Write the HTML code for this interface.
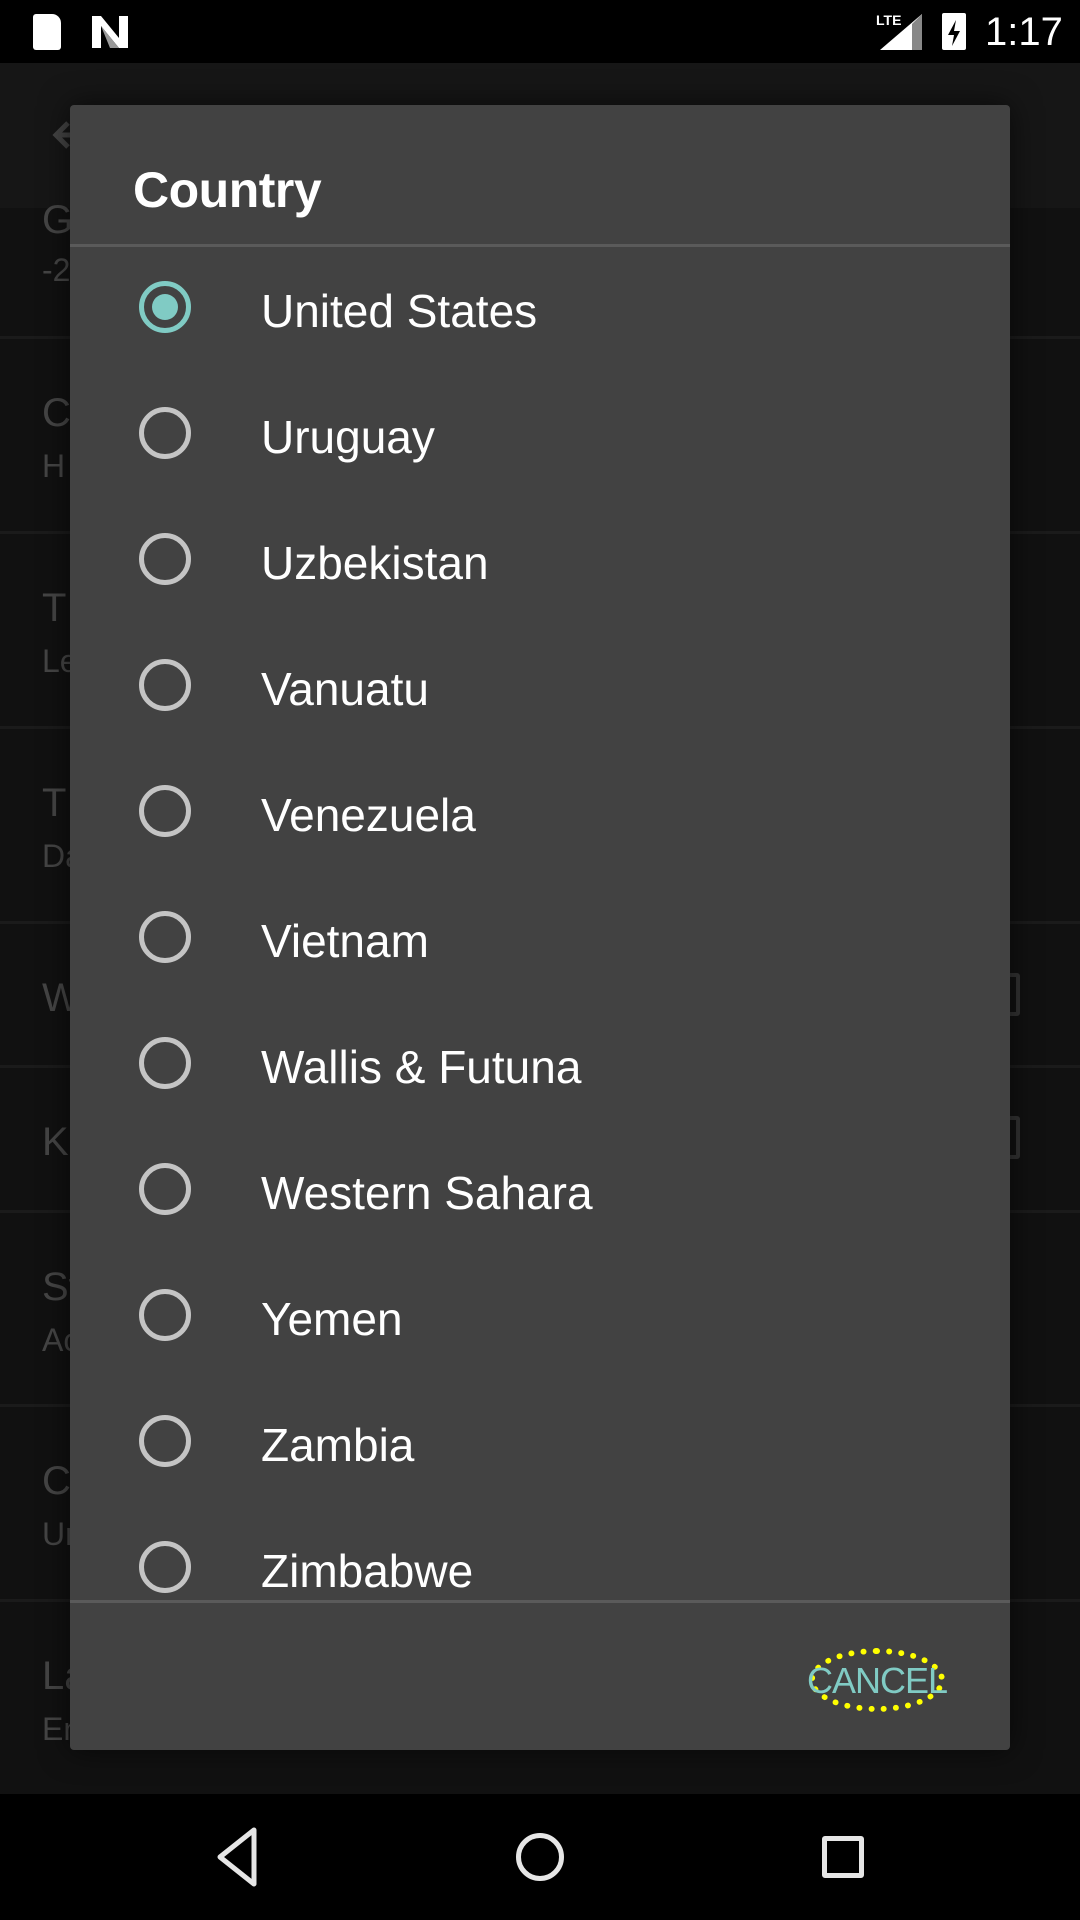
<!DOCTYPE html>
<html><head><meta charset="utf-8"><style>
*{margin:0;padding:0;box-sizing:border-box}
body{width:1080px;height:1920px;background:#111;position:relative;overflow:hidden;font-family:"Liberation Sans",sans-serif}
.abs{position:absolute}
.bgt{position:absolute;left:42px;color:#454545;font-size:40px;line-height:1}
.sep{position:absolute;left:0;width:1080px;height:3px;background:#1b1b1b}
.dlg{position:absolute;left:70px;top:105px;width:940px;height:1645px;background:#424242;border-radius:4px;overflow:hidden;box-shadow:0 0 30px rgba(0,0,0,.6)}
.row{position:absolute;left:0;width:940px;height:126px}
.radio{position:absolute;left:69px;width:52px;height:52px;border:5px solid #c4c4c4;border-radius:50%}
.lbl{position:absolute;left:191px;color:#fff;font-size:46px;line-height:1}
</style></head><body>
<div class="abs" style="left:0;top:0;width:1080px;height:63px;background:#000"></div>
<div class="abs" style="left:33px;top:14px;width:28px;height:36px;background:#fff;border-radius:3px 9px 3px 3px"></div>
<svg class="abs" style="left:90px;top:14px" width="40" height="36" viewBox="0 0 40 36"><path d="M2 2h9l18 22V2h9v32h-9L11 12v22H2z" fill="#fff"/><path d="M11 12l18 22h-9z" fill="#999"/></svg>
<div class="abs" style="left:876px;top:12px;color:#fff;font-size:14px;font-weight:bold">LTE</div>
<svg class="abs" style="left:880px;top:14px" width="42" height="36"><path d="M42 0V36H0z" fill="#fff"/><path d="M42 0V36H32V10z" fill="#888"/></svg>
<div class="abs" style="left:942px;top:13px;width:24px;height:37px;background:#fff;border-radius:2px"></div>
<svg class="abs" style="left:944px;top:18px" width="20" height="30"><path d="M12 2L4 17h6l-2 11 8-15h-6z" fill="#000"/></svg>
<div class="abs" style="left:985px;top:10px;color:#fff;font-size:40px">1:17</div>
<div class="abs" style="left:0;top:63px;width:1080px;height:145px;background:#161616"></div>
<svg class="abs" style="left:48px;top:115px" width="40" height="40"><path d="M34 20H10M20 8L8 20l12 12" stroke="#444" stroke-width="5" fill="none"/></svg>
<div class="bgt" style="top:200px">G</div><div class="bgt" style="top:254px;font-size:32px">-2</div>
<div class="sep" style="top:336px"></div>
<div class="bgt" style="top:393px">C</div><div class="bgt" style="top:450px;font-size:32px">H</div>
<div class="sep" style="top:531px"></div>
<div class="bgt" style="top:588px">T</div><div class="bgt" style="top:645px;font-size:32px">Le</div>
<div class="sep" style="top:726px"></div>
<div class="bgt" style="top:783px">T</div><div class="bgt" style="top:840px;font-size:32px">Da</div>
<div class="sep" style="top:921px"></div>
<div class="bgt" style="top:978px">W</div>
<div class="sep" style="top:1065px"></div>
<div class="bgt" style="top:1122px">K</div>
<div class="sep" style="top:1210px"></div>
<div class="bgt" style="top:1267px">St</div><div class="bgt" style="top:1324px;font-size:32px">Ac</div>
<div class="sep" style="top:1404px"></div>
<div class="bgt" style="top:1461px">C</div><div class="bgt" style="top:1518px;font-size:32px">Ur</div>
<div class="sep" style="top:1599px"></div>
<div class="bgt" style="top:1656px">La</div><div class="bgt" style="top:1713px;font-size:32px">En</div>
<div class="abs" style="left:990px;top:973px;width:30px;height:43px;border:4px solid #333;border-radius:3px"></div>
<div class="abs" style="left:990px;top:1116px;width:30px;height:43px;border:4px solid #333;border-radius:3px"></div>
<div class="dlg">
<div class="abs" style="left:63px;top:60px;color:#fff;font-size:50px;font-weight:bold;line-height:1;letter-spacing:-0.5px">Country</div>
<div class="abs" style="left:0;top:139px;width:940px;height:3px;background:#5a5a5a"></div>
<div class="row" style="top:139px"><div class="radio" style="top:37px;border-color:#80cbc4"><div style="position:absolute;left:8px;top:8px;width:26px;height:26px;border-radius:50%;background:#80cbc4"></div></div><div class="lbl" style="top:44px">United States</div></div>
<div class="row" style="top:265px"><div class="radio" style="top:37px"></div><div class="lbl" style="top:44px">Uruguay</div></div>
<div class="row" style="top:391px"><div class="radio" style="top:37px"></div><div class="lbl" style="top:44px">Uzbekistan</div></div>
<div class="row" style="top:517px"><div class="radio" style="top:37px"></div><div class="lbl" style="top:44px">Vanuatu</div></div>
<div class="row" style="top:643px"><div class="radio" style="top:37px"></div><div class="lbl" style="top:44px">Venezuela</div></div>
<div class="row" style="top:769px"><div class="radio" style="top:37px"></div><div class="lbl" style="top:44px">Vietnam</div></div>
<div class="row" style="top:895px"><div class="radio" style="top:37px"></div><div class="lbl" style="top:44px">Wallis &amp; Futuna</div></div>
<div class="row" style="top:1021px"><div class="radio" style="top:37px"></div><div class="lbl" style="top:44px">Western Sahara</div></div>
<div class="row" style="top:1147px"><div class="radio" style="top:37px"></div><div class="lbl" style="top:44px">Yemen</div></div>
<div class="row" style="top:1273px"><div class="radio" style="top:37px"></div><div class="lbl" style="top:44px">Zambia</div></div>
<div class="row" style="top:1399px;height:96px;overflow:hidden"><div class="radio" style="top:37px"></div><div class="lbl" style="top:44px">Zimbabwe</div></div>
<div class="abs" style="left:0;top:1495px;width:940px;height:3px;background:#5a5a5a"></div>
<div class="abs" style="left:739px;top:1543px;width:136px;height:64px;border:6px dotted #ffff00;border-radius:50%"></div>
<div class="abs" style="left:737px;top:1558px;width:140px;text-align:center;color:#80cbc4;font-size:36px;line-height:1;letter-spacing:-1px">CANCEL</div>
</div>
<div class="abs" style="left:0;top:1794px;width:1080px;height:126px;background:#000"></div>
<svg class="abs" style="left:200px;top:1826px" width="80" height="62"><path d="M54 4L20 31l34 27z" stroke="#e6e6e6" stroke-width="5" fill="none" stroke-linejoin="round"/></svg>
<div class="abs" style="left:516px;top:1833px;width:48px;height:48px;border:5px solid #e6e6e6;border-radius:50%"></div>
<div class="abs" style="left:822px;top:1836px;width:42px;height:42px;border:5px solid #e6e6e6;border-radius:3px"></div>
</body></html>
